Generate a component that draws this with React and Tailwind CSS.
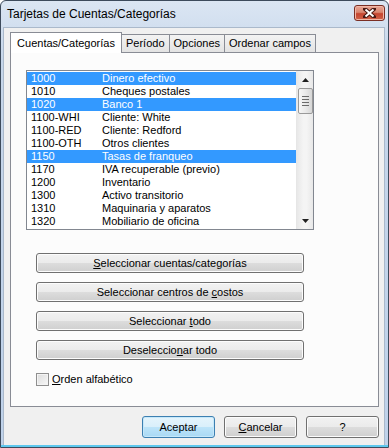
const rows = [
  ['1000', 'Dinero efectivo', true],
  ['1010', 'Cheques postales', false],
  ['1020', 'Banco 1', true],
  ['1100-WHI', 'Cliente: White', false],
  ['1100-RED', 'Cliente: Redford', false],
  ['1100-OTH', 'Otros clientes', false],
  ['1150', 'Tasas de franqueo', true],
  ['1170', 'IVA recuperable (previo)', false],
  ['1200', 'Inventario', false],
  ['1300', 'Activo transitorio', false],
  ['1310', 'Maquinaria y aparatos', false],
  ['1320', 'Mobiliario de oficina', false],
];

const font = { fontFamily: '"Liberation Sans", Arial, sans-serif' };

function Btn({ children, primary, className = '' }) {
  return (
    <div
      className={
        'flex items-center justify-center rounded-[3px] border text-[11px] text-black ' +
        (primary
          ? 'border-[#3c7fb1] bg-[linear-gradient(#e5f4fc_0%,#d9effb_50%,#bde4f9_50%,#a9d9f4_100%)] shadow-[inset_0_0_0_1px_#c6e8fa] '
          : 'border-[#707070] bg-[linear-gradient(#f2f2f2_0%,#ebebeb_50%,#dddddd_50%,#cfcfcf_100%)] shadow-[inset_0_0_0_1px_#fcfcfc] ') +
        className
      }
    >
      {children}
    </div>
  );
}

function Tab({ label, active }) {
  if (active) {
    return (
      <div className="relative z-10 -mb-px flex h-[21px] w-[112px] items-center justify-center border border-b-0 border-[#898c95] bg-white text-[11px]">
        {label}
      </div>
    );
  }
  return (
    <div className="flex h-[18px] items-center border border-b-0 border-l-0 border-[#898c95] bg-[linear-gradient(#f3f3f3,#e3e3e3)] px-[4px] text-[11px]">
      {label}
    </div>
  );
}

function CloseButton() {
  return (
    <div className="flex h-[16px] w-[31px] items-center justify-center rounded-[3px] border border-[#7a2e24] bg-[linear-gradient(#e9a796_0%,#d98670_45%,#c5452f_55%,#d0624a_100%)] shadow-[inset_0_0_0_1px_#f0b8a8]">
      <svg width="13" height="10" viewBox="0 0 13 10">
        <path d="M2 1 L11 9 M11 1 L2 9" stroke="#4a1a14" strokeWidth="4" strokeLinecap="square" />
        <path d="M2.5 1.5 L10.5 8.5 M10.5 1.5 L2.5 8.5" stroke="#ffffff" strokeWidth="2" />
      </svg>
    </div>
  );
}

function ScrollBar() {
  return (
    <div className="flex w-[17px] flex-col items-center border-l border-[#e6e6e6] bg-[linear-gradient(90deg,#e8e8e8,#f4f4f4_40%,#f4f4f4_60%,#e8e8e8)]">
      <div className="flex h-[17px] w-full items-center justify-center">
        <svg width="7" height="4" viewBox="0 0 7 4">
          <path d="M3.5 0 L7 4 L0 4 Z" fill="#202020" />
        </svg>
      </div>
      <div className="flex h-[26px] w-[15px] flex-col items-center justify-center gap-[2px] rounded-[2px] border border-[#9a9a9a] bg-[linear-gradient(90deg,#f6f6f6,#e9e9e9_50%,#d6d6d6)]">
        <div className="h-px w-[7px] bg-[#6a6a6a]" />
        <div className="h-px w-[7px] bg-[#6a6a6a]" />
        <div className="h-px w-[7px] bg-[#6a6a6a]" />
        <div className="h-px w-[7px] bg-[#6a6a6a]" />
      </div>
      <div className="flex-1" />
      <div className="flex h-[17px] w-full items-center justify-center">
        <svg width="7" height="4" viewBox="0 0 7 4">
          <path d="M0 0 L7 0 L3.5 4 Z" fill="#202020" />
        </svg>
      </div>
    </div>
  );
}

export default function App() {
  return (
    <div
      className="flex h-[448px] w-[389px] flex-col overflow-hidden rounded-t-[6px] border border-[#3d4b5c] bg-[linear-gradient(#dbe6f3,#c6d6ea_60px,#bfd2ea)] text-black"
      style={font}
    >
      {/* title bar */}
      <div className="flex h-[26px] shrink-0 items-center justify-between pl-[6px] pr-[3px]">
        <span className="text-[12px] text-black">Tarjetas de Cuentas/Categorías</span>
        <div className="self-start pt-[4px]">
          <CloseButton />
        </div>
      </div>

      {/* client */}
      <div className="ml-[2px] mr-[3px] flex flex-1 flex-col border border-b-0 border-[#aab9cb] bg-[#f0f0f0]">
        <div className="ml-[6px] mr-[5px] mt-[4px] flex flex-col">
          <div className="flex items-end">
            <Tab label="Cuentas/Categorías" active />
            <Tab label="Período" />
            <Tab label="Opciones" />
            <Tab label="Ordenar campos" />
          </div>

          <div className="flex h-[355px] flex-col border border-[#898c95] bg-[#fcfcfc] pl-[15px] pt-[17px]">
            {/* list */}
            <div className="flex h-[160px] w-[288px] border border-[#828790] bg-white">
              <div className="flex flex-1 flex-col pt-px">
                {rows.map(([code, name, sel]) => (
                  <div
                    key={code}
                    className={
                      'flex h-[13px] items-center text-[11px] leading-[13px] ' +
                      (sel ? 'bg-[#3399ff] text-white' : 'text-black')
                    }
                  >
                    <span className="w-[75px] pl-[4px]">{code}</span>
                    <span>{name}</span>
                  </div>
                ))}
              </div>
              <ScrollBar />
            </div>

            {/* action buttons */}
            <div className="ml-[10px] mt-[23px] flex w-[268px] flex-col gap-[9px]">
              <Btn className="h-[20px]">
                <span><u>S</u>eleccionar cuentas/categorías</span>
              </Btn>
              <Btn className="h-[20px]">
                <span>Seleccionar centros de <u>c</u>ostos</span>
              </Btn>
              <Btn className="h-[20px]">
                <span>Seleccionar <u>t</u>odo</span>
              </Btn>
              <Btn className="h-[20px]">
                <span>Deseleccio<u>n</u>ar todo</span>
              </Btn>
            </div>

            <div className="ml-[10px] mt-[11px] flex items-center gap-[3px] text-[11px]">
              <div className="h-[13px] w-[13px] border border-[#8f8f8f] bg-[linear-gradient(135deg,#dcdcdc,#f8f8f8)] shadow-[inset_0_0_0_1px_#f4f4f4]" />
              <span><u>O</u>rden alfabético</span>
            </div>
          </div>
        </div>

        {/* dialog buttons */}
        <div className="mr-[5px] mt-[9px] flex justify-end gap-[9px]">
          <Btn primary className="h-[22px] w-[73px]">Aceptar</Btn>
          <Btn className="h-[22px] w-[73px]">
            <span><u>C</u>ancelar</span>
          </Btn>
          <Btn className="h-[22px] w-[73px]">?</Btn>
        </div>
      </div>
      <div className="h-[2px] shrink-0 bg-[#5ec8ee]" />
    </div>
  );
}
